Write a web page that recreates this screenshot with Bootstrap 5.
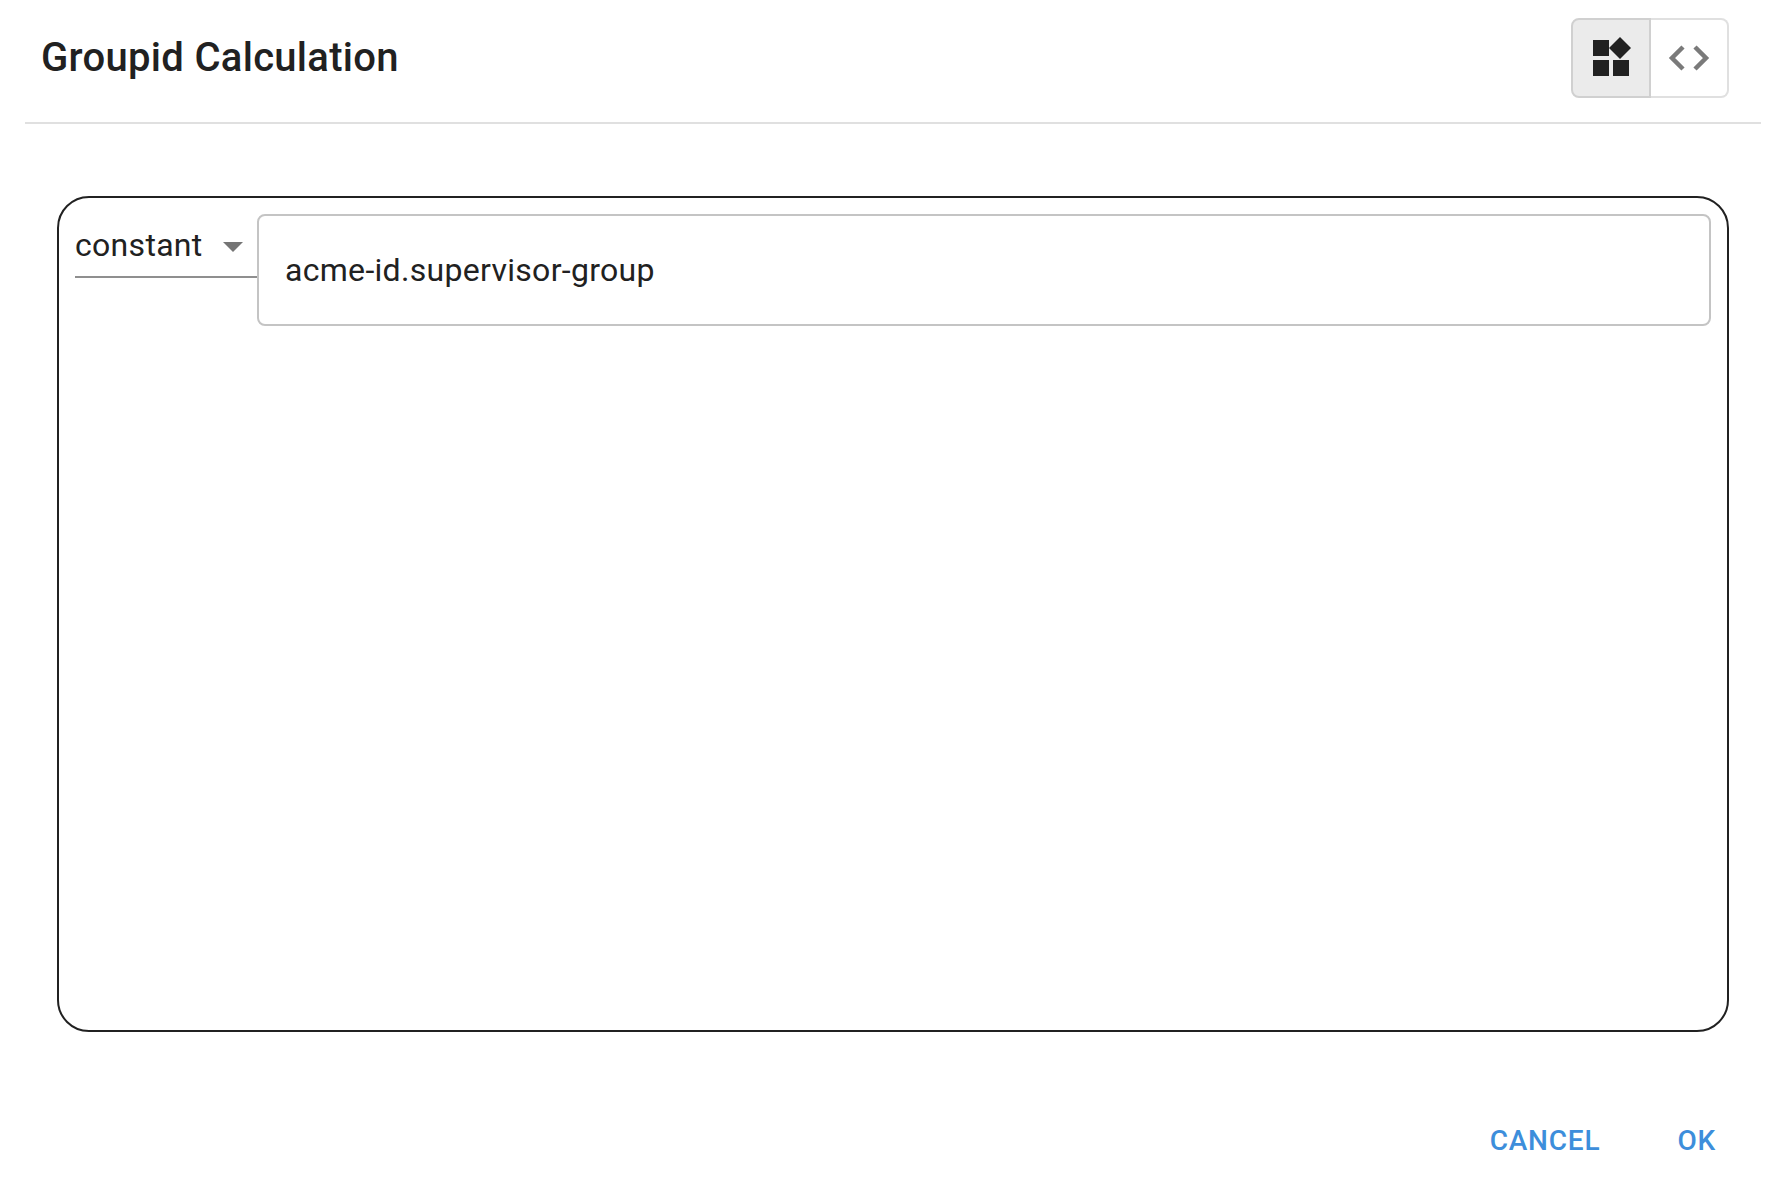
<!DOCTYPE html>
<html lang="en">
<head>
  <meta charset="UTF-8" />
  <title>Groupid Calculation</title>
  <link href="https://cdn.jsdelivr.net/npm/bootstrap@5.3.0/dist/css/bootstrap.min.css" rel="stylesheet"/>
  <style>
    body { font-family: Roboto, "Liberation Sans", sans-serif; color: #212121; background: #fff; }
    .dlg { width: 1788px; height: 1190px; padding: 0 27px 0 25px; }
    .dlg-head { height: 124px; padding: 18px 32px 0 16px; border-bottom: 2px solid #e0e0e0; }
    .dlg-title { font-size: 40px; font-weight: 500; line-height: 80px; margin: 0; letter-spacing: .3px; }
    .mode-btn { width: 78px; height: 80px; padding: 0; border: 2px solid #e0e0e0; background: #fff; }
    .mode-btn:first-child { width: 80px; background: #ebebeb; border-color: #d0d0d0; border-radius: 8px 0 0 8px; }
    .mode-btn:last-child { border-left: 0; border-radius: 0 8px 8px 0; }
    .expr-box { height: 836px; margin: 72px 32px 0 32px; padding: 16px; border: 2px solid #212121; border-radius: 32px; }
    .const-select { width: 182px; height: 64px; border-bottom: 2px solid #8f8f8f; font-size: 32px; line-height: 60px; letter-spacing: .3px; padding-right: 14px; }
    .caret-icon { margin-top: 4px; }
    .const-input { height: 112px; padding: 0 26px; border: 2px solid #c4c4c4; border-radius: 8px; font-size: 32px; letter-spacing: .3px; }
    .dlg-foot { padding-top: 85px; padding-right: 45px; gap: 77px; }
    .foot-btn { padding: 0; border: 0; background: none; color: #3d8edb; font-size: 28px; font-weight: 500; line-height: 48px; letter-spacing: .8px; }
  </style>
</head>
<body>
  <div class="dlg">
    <div class="dlg-head d-flex justify-content-between align-items-start">
      <h2 class="dlg-title">Groupid Calculation</h2>
      <div class="d-flex">
        <button class="mode-btn d-flex align-items-center justify-content-center" type="button" aria-label="Builder">
          <svg width="40" height="42" viewBox="0 0 40 42" fill="#212121"><rect x="2" y="3" width="16" height="16"/><rect x="2" y="23" width="16" height="16"/><rect x="22" y="23" width="16" height="16"/><path d="M29 0 40 11 29 22 18 11Z"/></svg>
        </button>
        <button class="mode-btn d-flex align-items-center justify-content-center" type="button" aria-label="Code">
          <svg width="44" height="26" viewBox="0 0 44 26" fill="none" stroke="#7a7a7a" stroke-width="4.5"><path d="M16 2 5 13 16 24M28 2 39 13 28 24"/></svg>
        </button>
      </div>
    </div>
    <div class="expr-box d-flex align-items-start">
      <div class="const-select d-flex justify-content-between align-items-center flex-shrink-0">
        <span>constant</span>
        <svg class="caret-icon" width="20" height="10" viewBox="0 0 20 10" fill="#757575"><path d="M0 0H20L10 10Z"/></svg>
      </div>
      <div class="const-input flex-grow-1 d-flex align-items-center">acme-id.supervisor-group</div>
    </div>
    <div class="dlg-foot d-flex justify-content-end">
      <button class="foot-btn" type="button">CANCEL</button>
      <button class="foot-btn" type="button">OK</button>
    </div>
  </div>
  <script src="https://cdn.jsdelivr.net/npm/bootstrap@5.3.0/dist/js/bootstrap.bundle.min.js"></script>
</body>
</html>
